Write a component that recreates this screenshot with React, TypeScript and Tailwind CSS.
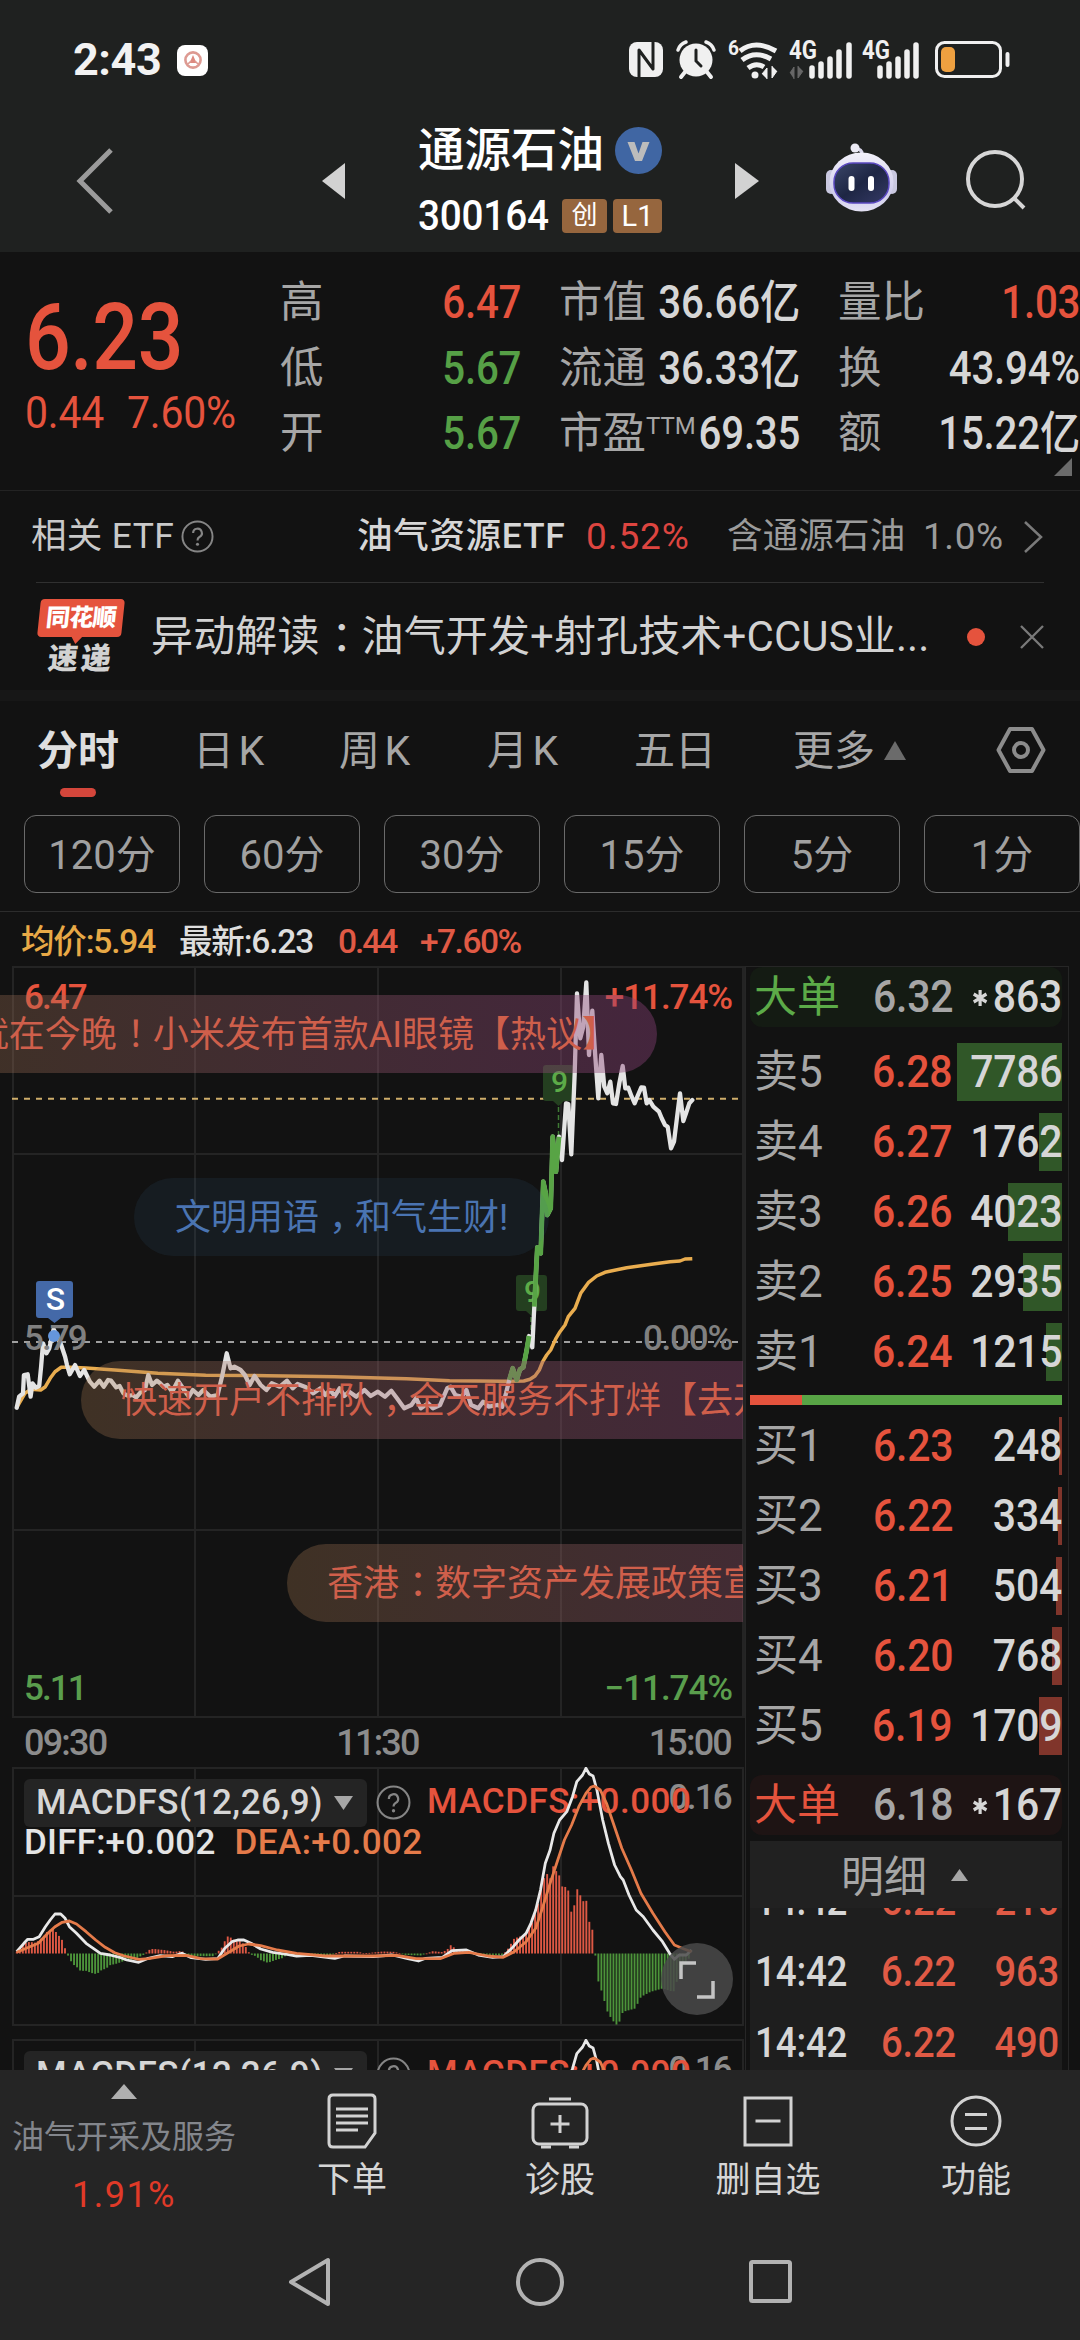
import React from 'react';
import { clsx } from 'clsx';

type Pt = [number, number];

interface Level {
  label: string;
  price: string;
  volume: string;
  bar: number;
}

const sells: Level[] = [
  { label: '卖5', price: '6.28', volume: '7786', bar: 105 },
  { label: '卖4', price: '6.27', volume: '1762', bar: 23 },
  { label: '卖3', price: '6.26', volume: '4023', bar: 54 },
  { label: '卖2', price: '6.25', volume: '2935', bar: 39 },
  { label: '卖1', price: '6.24', volume: '1215', bar: 16 },
];

const buys: Level[] = [
  { label: '买1', price: '6.23', volume: '248', bar: 3 },
  { label: '买2', price: '6.22', volume: '334', bar: 4 },
  { label: '买3', price: '6.21', volume: '504', bar: 6 },
  { label: '买4', price: '6.20', volume: '768', bar: 10 },
  { label: '买5', price: '6.19', volume: '1709', bar: 23 },
];

const ticks = [
  { time: '14:42', price: '6.22', volume: '210' },
  { time: '14:42', price: '6.22', volume: '963' },
  { time: '14:42', price: '6.22', volume: '490' },
];

// Morning part of the price line, sampled on a 2.09 x 3 grid
const priceEarly: Pt[] = [
  [35, 1343], [40, 1310], [48, 1300], [50, 1245], [58, 1243], [64, 1310], [68, 1270], [75, 1283], [82, 1278], [86, 1220], [90, 1150],
  [97, 1180], [103, 1165], [112, 1108], [118, 1125], [128, 1155], [136, 1190], [140, 1215], [146, 1243], [157, 1215], [167, 1248],
  [176, 1230], [188, 1265], [197, 1280], [208, 1262], [217, 1280], [226, 1260], [232, 1262], [243, 1282], [250, 1278], [258, 1300],
  [268, 1308], [277, 1305], [285, 1312], [295, 1295], [303, 1290], [310, 1245], [318, 1275], [328, 1262], [335, 1270], [342, 1280],
  [350, 1275], [360, 1295], [372, 1262], [385, 1290], [395, 1310], [403, 1290], [415, 1305], [425, 1290], [440, 1310], [455, 1305],
  [465, 1245], [474, 1180], [482, 1225], [490, 1220], [503, 1230], [512, 1245], [522, 1275], [532, 1248], [545, 1275], [557, 1290],
  [568, 1270], [585, 1280], [600, 1262], [612, 1285], [622, 1272], [640, 1282], [655, 1300], [670, 1285], [680, 1305], [690, 1290],
  [700, 1308], [710, 1285], [720, 1308], [730, 1295], [745, 1310], [762, 1290], [775, 1308], [790, 1295], [805, 1310], [818, 1292],
  [830, 1315], [845, 1345], [860, 1335], [870, 1315], [880, 1345], [895, 1330], [905, 1345], [920, 1335], [935, 1285], [942, 1280],
  [952, 1305], [965, 1310], [975, 1290], [985, 1335], [1000, 1345], [1010, 1325], [1022, 1340], [1040, 1335], [1050, 1340],
];

// The rally, sampled on a 3 x 3 grid that starts at x = 480
const priceRally: Pt[] = [
  [68, 1335], [78, 1300], [88, 1260], [98, 1225], [110, 1260], [120, 1228], [130, 1222], [140, 1170], [147, 1128], [157, 1162], [163, 1040],
  [172, 862], [182, 880], [190, 665], [197, 700], [202, 765], [212, 745], [218, 530], [228, 635], [237, 530], [246, 600], [258, 430],
  [265, 432], [274, 583], [284, 340], [291, 100], [301, 235], [310, 200], [319, 67], [327, 285], [337, 152], [346, 290], [355, 415],
  [364, 285], [373, 380], [382, 400], [391, 365], [399, 430], [408, 432], [418, 370], [428, 318], [436, 385], [445, 383], [455, 410],
  [464, 430], [474, 405], [484, 382], [492, 383], [500, 430], [508, 420], [520, 440], [537, 455], [545, 475], [555, 495], [563, 500],
  [573, 565], [582, 545], [590, 480], [600, 400], [610, 483], [618, 460], [628, 430], [637, 420],
];

const avgEarly: Pt[] = [
  [35, 1343], [52, 1300], [65, 1288], [85, 1290], [95, 1280], [105, 1255], [115, 1235], [128, 1222], [145, 1222], [180, 1224],
  [240, 1230], [330, 1240], [430, 1246], [560, 1247], [700, 1250], [850, 1256], [940, 1262], [1050, 1264], [1095, 1263],
];

const avgRally: Pt[] = [
  [150, 1258], [165, 1248], [178, 1230], [188, 1205], [200, 1185], [212, 1170], [228, 1135], [240, 1115], [255, 1095], [265, 1070],
  [285, 1045], [302, 1000], [325, 968], [350, 948], [375, 937], [440, 923], [520, 912], [570, 905], [600, 903], [615, 897], [637, 896],
];

const diffLine: Pt[] = [
  [35, 605], [50, 580], [58, 568], [70, 568], [82, 560], [95, 530], [105, 510], [115, 492], [127, 492], [136, 505], [145, 530],
  [160, 550], [180, 580], [195, 595], [210, 610], [230, 615], [250, 622], [265, 630], [290, 637], [310, 625], [335, 617], [360, 620],
  [380, 610], [400, 623], [430, 628], [455, 626], [470, 595], [485, 575], [497, 570], [510, 570], [525, 580], [545, 597], [570, 607],
  [600, 613], [620, 618], [650, 616], [700, 625], [720, 618], [780, 620], [820, 615], [850, 625], [875, 633], [890, 625], [925, 622],
  [945, 602], [975, 600], [1000, 615], [1030, 622], [1052, 620], [1070, 595], [1085, 570], [1100, 550], [1110, 520], [1120, 480],
  [1130, 420], [1140, 340], [1150, 300], [1158, 250], [1170, 210], [1185, 185], [1197, 140], [1206, 95], [1218, 75], [1225, 55],
  [1232, 72], [1240, 78], [1248, 120], [1260, 210], [1272, 280], [1285, 345], [1297, 380], [1303, 390], [1315, 435], [1330, 480],
  [1345, 500], [1365, 540], [1385, 575], [1400, 610], [1410, 628], [1420, 615], [1435, 615], [1446, 600],
];

const deaLine: Pt[] = [
  [35, 607], [60, 592], [80, 580], [100, 550], [115, 530], [130, 517], [145, 513], [160, 522], [180, 545], [200, 570], [220, 592],
  [240, 608], [260, 618], [290, 628], [310, 626], [350, 617], [390, 616], [420, 626], [455, 627], [480, 605], [500, 588], [520, 582],
  [545, 587], [580, 600], [620, 610], [680, 618], [780, 618], [830, 616], [870, 626], [920, 626], [950, 610], [980, 607], [1020, 618],
  [1052, 622], [1075, 605], [1100, 575], [1120, 535], [1135, 470], [1150, 400], [1165, 335], [1180, 270], [1195, 225], [1210, 170],
  [1225, 130], [1235, 112], [1242, 108], [1255, 120], [1268, 160], [1280, 210], [1300, 295], [1320, 360], [1340, 430], [1365, 490],
  [1390, 545], [1410, 585], [1430, 597], [1446, 605],
];

const histogram: Pt[] = [
  [35, 5], [50, 30], [62, 35], [75, 32], [90, 50], [100, 68], [110, 75], [115, 68], [122, 55], [130, 40], [136, 15], [140, 0],
  [145, -15], [152, -32], [160, -40], [168, -52], [180, -52], [190, -58], [202, -62], [212, -50], [222, -45], [230, -35], [245, -30],
  [260, -22], [280, -18], [303, -2], [310, 10], [320, 14], [345, 10], [365, 5], [380, 8], [388, -4], [410, -8], [445, -8], [455, 5],
  [465, 20], [474, 52], [482, 48], [490, 40], [500, 38], [510, 28], [518, 10], [522, -2], [535, -8], [545, -20], [560, -28],
  [575, -20], [590, -14], [600, -4], [620, -6], [640, -3], [690, -6], [710, 5], [750, 5], [760, 0], [800, 6], [825, 5], [845, -4],
  [880, -6], [905, 7], [925, 4], [935, 12], [942, 25], [955, 12], [965, 8], [980, 4], [1000, -3], [1050, -5], [1060, 10], [1075, 45],
  [1095, 55], [1105, 75], [1115, 100], [1125, 150], [1135, 220], [1143, 240], [1150, 225], [1157, 265], [1165, 240], [1172, 230],
  [1176, 195], [1182, 200], [1190, 185], [1194, 125], [1200, 140], [1206, 195], [1213, 175], [1218, 155], [1225, 165], [1232, 95],
  [1240, 65], [1244, 2], [1250, -80], [1257, -110], [1264, -145], [1270, -175], [1280, -200], [1290, -215], [1297, -200],
  [1302, -175], [1328, -165], [1340, -130], [1360, -115], [1385, -105], [1408, -115], [1418, -70], [1430, -30], [1445, -8],
];

const WIDE = 1568 / 750;

const project = (pts: Pt[], x0: number, y0: number, sx: number): Pt[] =>
  pts.map(([x, y]) => [+(x0 + x / sx).toFixed(1), +(y0 + y / 3).toFixed(1)]);

const toPoints = (pts: Pt[]) => pts.map((p) => p.join(',')).join(' ');

const rally = project(priceRally, 480, -6, 3);
const price = [...project(priceEarly, 0, -6, WIDE), ...rally];
const average = [...project(avgEarly, 0, -6, WIDE), ...project(avgRally, 480, -6, 3)];

const sample = (pts: Pt[], x: number) => {
  const i = pts.findIndex((p) => p[0] >= x);
  if (i <= 0) return pts[0][1];
  const [x1, y1] = pts[i - 1];
  const [x2, y2] = pts[i];
  return y1 + ((y2 - y1) * (x - x1)) / (x2 - x1);
};

const bars = Array.from({ length: 224 }, (_, i) => {
  const x = 35 + i * 6.3;
  return { x: x / WIDE, h: sample(histogram, x) / 3 };
});

// Full-width punctuation sits in the middle of its cell
function Cn({ children }: { children: string }) {
  return (
    <>
      {children.split(/([：，！])/).map((part, i) =>
        /[：，！]/.test(part) ? (
          <span key={i} className="inline-block w-[1em] indent-[0.28em]">{part}</span>
        ) : (
          <React.Fragment key={i}>{part}</React.Fragment>
        )
      )}
    </>
  );
}

interface NumProps {
  children: React.ReactNode;
  right?: boolean;
  tight?: boolean;
  className?: string;
}

// Slightly condensed numerals
function Num({ children, right, tight, className }: NumProps) {
  return (
    <span
      className={clsx(
        'inline-block tracking-[-0.005em]',
        tight ? 'scale-x-[0.875]' : 'scale-x-[0.91]',
        right ? 'origin-right' : 'origin-left',
        className
      )}
    >
      {children}
    </span>
  );
}

function StatusBar() {
  return (
    <div className="flex items-center h-[120px] pl-[73px] pr-[69px]">
      <span className="text-[45px] font-bold text-[#f2f2f2] tracking-[-0.01em]">2:43</span>
      <div className="ml-[16px] w-[31px] h-[31px] rounded-[8px] bg-white flex items-center justify-center">
        <svg width="22" height="22" viewBox="0 0 22 22" fill="none">
          <circle cx="11" cy="11" r="7.6" stroke="#dd9a92" strokeWidth="2.6" />
          <path d="M11 6l3.4 8H7.6z" fill="#dd8a80" />
          <path d="M6 15l3-3M16 15l-3-3" stroke="#dd9a92" strokeWidth="1.6" />
        </svg>
      </div>
      <div className="flex-1" />
      <svg width="383" height="44" viewBox="627 38 383 44" fill="none">
        {/* nfc */}
        <rect x="628" y="42" width="34" height="35" rx="8" fill="#f0f0f0" />
        <path d="M638 77V50L652 69V42" stroke="#1f2120" strokeWidth="3" strokeLinejoin="round" />
        {/* alarm */}
        <circle cx="695" cy="60" r="16.500" fill="#f0f0f0" />
        <path d="M677 50q2-6 8-8M713 50q-2-6-8-8" stroke="#f0f0f0" strokeWidth="3.500" strokeLinecap="round" />
        <path d="M684 72l-4 5M706 72l4 5" stroke="#f0f0f0" strokeWidth="4" strokeLinecap="round" />
        <path d="M695 50v11l5 5" stroke="#1f2120" strokeWidth="3" strokeLinecap="round" />
        {/* wifi */}
        <path d="M739 51q15-12 36 0" stroke="#f0f0f0" strokeWidth="5" />
        <path d="M741 60q13-10 29-1" stroke="#f0f0f0" strokeWidth="5" />
        <path d="M747 68q8-6 16-1" stroke="#f0f0f0" strokeWidth="5" />
        <circle cx="754" cy="75" r="3.500" fill="#f0f0f0" />
        <path d="M761 74l5-6v11M776 71l-5 7V66" fill="#f0f0f0" stroke="#f0f0f0" />
        <path d="M789 73l4-6v12M802 71l-5 7V66" fill="#666" stroke="#666" />
        {/* signal bars */}
        <path d="M811 76v-8M820 76V64M829 76V59M838 76V52M848 76V45" stroke="#f0f0f0" strokeWidth="5.500" strokeLinecap="round" />
        <path d="M879 76v-8M888 76V64M897 76V59M906 76V52M915 76V45" stroke="#f0f0f0" strokeWidth="5.500" strokeLinecap="round" />
        <g fill="#f0f0f0" fontFamily="Roboto" fontWeight="700">
          <text x="727" y="55" fontSize="20" textLength="11" lengthAdjust="spacingAndGlyphs">6</text>
          <text x="788" y="59" fontSize="25" textLength="28" lengthAdjust="spacingAndGlyphs">4G</text>
          <text x="861" y="59" fontSize="25" textLength="28" lengthAdjust="spacingAndGlyphs">4G</text>
        </g>
        {/* battery */}
        <rect x="935.500" y="42.500" width="64" height="34" rx="8" stroke="#f0f0f0" strokeWidth="3" />
        <rect x="940" y="47" width="14" height="25" rx="5" fill="#eea040" />
        <path d="M1006.500 54v11" stroke="#f0f0f0" strokeWidth="4" strokeLinecap="round" />
      </svg>
    </div>
  );
}

function Robot() {
  return (
    <svg width="74" height="72" viewBox="0 0 74 72" fill="none">
      <defs>
        <linearGradient id="shell" x1="0" y1="0" x2="0" y2="1">
          <stop offset="0" stopColor="#f2f1fa" />
          <stop offset="0.7" stopColor="#cfccec" />
          <stop offset="1" stopColor="#e4e2f4" />
        </linearGradient>
        <linearGradient id="visor" x1="0" y1="0" x2="1" y2="1">
          <stop offset="0" stopColor="#3a4668" />
          <stop offset="0.5" stopColor="#1e2644" />
          <stop offset="1" stopColor="#353a66" />
        </linearGradient>
      </defs>
      <path d="M36 14q3-6-3-8" stroke="#d8d6ea" strokeWidth="3.500" />
      <circle cx="30" cy="5" r="4.500" fill="#ecebf6" />
      <rect x="1" y="27" width="10" height="24" rx="5" fill="#c9c8e0" />
      <rect x="62" y="27" width="10" height="24" rx="5" fill="#c9c8e0" />
      <ellipse cx="36.500" cy="39" rx="32" ry="29.500" fill="url(#shell)" />
      <rect x="9" y="20" width="55" height="40" rx="19" fill="url(#visor)" stroke="#5a48c0" strokeWidth="1.500" />
      <rect x="23.500" y="33" width="6" height="15" rx="3" fill="#fff" />
      <rect x="43" y="33" width="6" height="15" rx="3" fill="#fff" />
    </svg>
  );
}

function TitleBar() {
  return (
    <div className="flex items-center h-[130px] pb-[8px]">
      <svg className="ml-[75px]" width="40" height="68" viewBox="0 0 40 68" fill="none">
        <path d="M36 3L5 34l31 31" stroke="#9b9b9b" strokeWidth="5" />
      </svg>
      <svg className="ml-[207px]" width="23" height="36" viewBox="0 0 23 36">
        <path d="M23 0v36L0 18z" fill="#d2d2d2" />
      </svg>
      <div className="ml-[73px] mb-[6px] w-[248px] flex flex-col gap-[22px]">
        <div className="flex items-center h-[54px]">
          <span className="text-[46.500px] leading-[54px] font-medium text-white whitespace-nowrap">通源石油</span>
          <svg className="ml-[11px] shrink-0" width="47" height="47" viewBox="0 0 47 47">
            <circle cx="23.500" cy="23.500" r="23.500" fill="#4066a3" />
            <path d="M12.500 15h7l4 11.500 4-11.500h7l-7.500 19h-7z" fill="#bcbcbc" />
          </svg>
        </div>
        <div className="flex items-center h-[34px]">
          <span className="w-[144px] text-[42.500px] leading-[34px] font-medium text-white">
            <Num>300164</Num>
          </span>
          <span className="w-[45px] h-[34px] rounded-[4px] bg-[#96663e] text-white text-[26px] leading-[33px] text-center">创</span>
          <span className="ml-[6px] w-[49px] h-[34px] rounded-[4px] bg-[#96663e] text-white text-[29px] leading-[34px] text-center">L1</span>
        </div>
      </div>
      <svg className="ml-[69px]" width="24" height="36" viewBox="0 0 24 36">
        <path d="M0 0v36l24-18z" fill="#d2d2d2" />
      </svg>
      <div className="ml-[66px] mb-[4px]">
        <Robot />
      </div>
      <svg className="ml-[67px]" width="62" height="62" viewBox="0 0 62 62" fill="none">
        <circle cx="29" cy="29" r="27" stroke="#d6d6d6" strokeWidth="4" />
        <path d="M48 48l10 10" stroke="#d6d6d6" strokeWidth="4" />
      </svg>
    </div>
  );
}

interface StatProps {
  label: React.ReactNode;
  value: string;
  tone?: string;
}

function Stat({ label, value, tone = 'text-[#d6d6d6]' }: StatProps) {
  return (
    <div className="flex items-center justify-between h-[65.5px] leading-[65px] whitespace-nowrap">
      <span className="text-[43.5px] text-[#a6a6a6]">{label}</span>
      <Num right tight className={clsx('text-[46px] font-medium -ml-[40px]', tone)}>{value}</Num>
    </div>
  );
}

function Quote() {
  const red = 'text-[#e5533d]';
  const green = 'text-[#56a046]';
  return (
    <section className="relative flex h-[239px] pt-[18px] border-b border-[#232323]">
      <div className="w-[280px] pl-[25px] text-[#e5533d] shrink-0">
        <div className="pt-[14px] text-[92px] leading-[108px] font-medium">
          <Num tight>6.23</Num>
        </div>
        <div className="flex text-[45px] leading-[34px] mt-[4px]">
          <span className="w-[102px]"><Num>0.44</Num></span>
          <Num>7.60%</Num>
        </div>
      </div>
      <div className="w-[241px] shrink-0">
        <Stat label="高" value="6.47" tone={red} />
        <Stat label="低" value="5.67" tone={green} />
        <Stat label="开" value="5.67" tone={green} />
      </div>
      <div className="w-[241px] ml-[38px] shrink-0">
        <Stat label="市值" value="36.66亿" />
        <Stat label="流通" value="36.33亿" />
        <Stat label={<>市盈<sup className="text-[24px] top-[-0.6em]">TTM</sup></>} value="69.35" />
      </div>
      <div className="w-[242px] ml-[38px] shrink-0">
        <Stat label="量比" value="1.03" tone={red} />
        <Stat label="换" value="43.94%" />
        <Stat label="额" value="15.22亿" />
      </div>
      <svg className="absolute right-[8px] bottom-[14px]" width="18" height="18">
        <path d="M18 0v18H0z" fill="#6b6b6b" />
      </svg>
    </section>
  );
}

function Help({ size }: { size: number }) {
  return (
    <svg width={size} height={size} viewBox="0 0 34 34" fill="none" className="shrink-0">
      <circle cx="17" cy="17" r="15.500" stroke="#858585" strokeWidth="2" />
      <path d="M12.500 13.500a4.500 4.500 0 1 1 6.500 4q-2 1.200-2 3.500" stroke="#858585" strokeWidth="2.200" />
      <circle cx="17" cy="25" r="1.600" fill="#858585" />
    </svg>
  );
}

function EtfRow() {
  return (
    <section className="mr-[36px] pl-[31px] h-[91px] flex items-center whitespace-nowrap text-[35.5px]">
      <span className="text-[#c9c9c9] w-[150px] tracking-[0.01em]">相关 ETF</span>
      <Help size={33} />
      <span className="ml-[143px] w-[229px] text-[#d6d6d6] font-medium tracking-[0.02em]">油气资源ETF</span>
      <span className="text-[37px] text-[#dd4540] w-[141px] tracking-[0.025em]">0.52%</span>
      <span className="text-[#9b9b9b] w-[196px] tracking-[0.005em]">含通源石油</span>
      <span className="text-[37px] text-[#9b9b9b] w-[96px] tracking-[0.015em]">1.0%</span>
      <svg className="ml-auto" width="22" height="34" viewBox="0 0 22 34" fill="none">
        <path d="M3 2l16 15L3 32" stroke="#7a7a7a" strokeWidth="2.500" />
      </svg>
    </section>
  );
}

function NewsRow() {
  return (
    <section className="mx-[36px] h-[108px] border-t border-[#303030] flex items-center text-[#d2d2d2]">
      <div className="w-[89px] h-[76px] shrink-0 flex flex-col items-center">
        <div className="relative w-[84px] h-[38px] shrink-0 rounded-[4px] bg-[#e5533d] -skew-x-6 flex items-center justify-center">
          <span className="text-[24px] leading-[36px] font-black text-white tracking-[-0.03em]">同花顺</span>
          <svg className="absolute left-[34px] top-[37px]" width="12" height="8">
            <path d="M0 0h12L5 8z" fill="#e5533d" />
          </svg>
        </div>
        <span className="mt-[6px] text-[30px] leading-[32px] font-black -skew-x-6 tracking-[0.1em]">速递</span>
      </div>
      <span className="ml-[26px] text-[42px] whitespace-nowrap w-[790px] tracking-[0.003em]">
        <Cn>异动解读：油气开发+射孔技术+CCUS业...</Cn>
      </span>
      <span className="ml-[26px] w-[18px] h-[18px] rounded-full bg-[#e5533d] shrink-0" />
      <svg className="ml-auto shrink-0" width="24" height="24" viewBox="0 0 24 24">
        <path d="M1 1l22 22M23 1L1 23" stroke="#7a7a7a" strokeWidth="2.300" />
      </svg>
    </section>
  );
}

function Tabs() {
  return (
    <section className="h-[211px] border-b border-[#2c2c2c]">
      <div className="relative h-[114px] pl-[37px] pt-[21px] flex text-[41px] leading-[58px] text-[#a6a6a6] whitespace-nowrap">
        <span className="w-[156px] text-[#dedede] font-bold">分时</span>
        <span className="w-[146px] tracking-[0.11em]">日K</span>
        <span className="w-[148px] tracking-[0.11em]">周K</span>
        <span className="w-[147px] tracking-[0.11em]">月K</span>
        <span className="w-[159px]">五日</span>
        <span>更多</span>
        <svg className="ml-[9px] mt-[19px]" width="22" height="19">
          <path d="M11 0l11 19H0z" fill="#6b6b6b" />
        </svg>
        <svg className="ml-[90px] mt-[4px]" width="50" height="48" viewBox="0 0 50 48" fill="none">
          <path d="M14 3h22L47.500 24 36 45H14L2.500 24z" stroke="#8c8c8c" strokeWidth="4" strokeLinejoin="round" />
          <circle cx="25" cy="24" r="7" stroke="#8c8c8c" strokeWidth="4" />
        </svg>
        <span className="absolute left-[60px] top-[87px] w-[36px] h-[9px] rounded-full bg-[#d4463b]" />
      </div>
      <div className="flex gap-[24px] pl-[24px]">
        {['120分', '60分', '30分', '15分', '5分', '1分'].map((p) => (
          <button
            key={p}
            className="w-[156px] h-[78px] shrink-0 rounded-[12px] border border-[#6a6a6a] text-[#a0a0a0] text-[40px] leading-[74px] pt-[3px]"
          >
            {p}
          </button>
        ))}
      </div>
    </section>
  );
}

function Legend() {
  return (
    <div className="flex items-center h-[54px] pt-[7px] pl-[21px] text-[33.5px] tracking-[-0.035em] font-medium whitespace-nowrap">
      <span className="w-[158px] text-[#e8a946]">均价:5.94</span>
      <span className="w-[159px] text-[#dedede]">最新:6.23</span>
      <span className="w-[82px] text-[#e05a45] tracking-[-0.06em]">0.44</span>
      <span className="text-[#e05a45] tracking-[-0.045em]">+7.60%</span>
    </div>
  );
}

function Grid({ h, rows }: { h: number; rows: number[] }) {
  return (
    <g stroke="#242424" strokeWidth="2">
      {[13, 195, 378, 561, 743].map((x) => (
        <path key={x} d={`M${x} 0V${h}`} />
      ))}
      {rows.map((y) => (
        <path key={y} d={`M12 ${y}H744`} />
      ))}
    </g>
  );
}

function NineFlag({ x, y }: { x: number; y: number }) {
  return (
    <g>
      <path d={`M${x + 3} ${y}h25q3 0 3 3v30q0 3-3 3h-7l-5.500 5-5.500-5h-7q-3 0-3-3v-30q0-3 3-3z`} fill="#243f20" />
      <text x={x + 15.5} y={y + 27} fontSize="30" fontWeight="500" fontFamily="Roboto" textAnchor="middle" fill="#5cab48">9</text>
    </g>
  );
}

function PriceChart() {
  return (
    <div className="relative h-[752px] overflow-hidden text-[35px] leading-[36px] font-medium tracking-[-0.055em]">
      <svg className="block" width="745" height="752" fill="none" strokeLinejoin="round">
        <Grid h={752} rows={[1, 188, 564, 751]} />
        <path d="M12 132.700H744" stroke="#cfae6b" strokeWidth="2" strokeDasharray="6 6" />
        <path d="M12 376H744" stroke="#a0a0a0" strokeWidth="2" strokeDasharray="6 6" />
        <NineFlag x={543} y={99} />
        <NineFlag x={516} y={309} />
        <path d="M558.500 141v30M531 351v14" stroke="#3f7a35" strokeWidth="1.500" strokeDasharray="5 3" />
        <polyline points={toPoints(average)} stroke="#e9ad4f" strokeWidth="3.500" />
        <polyline points={toPoints(price)} stroke="#e4e4e4" strokeWidth="4.300" strokeLinecap="round" />
        <polyline points={toPoints(rally.slice(2, 9))} stroke="#58a445" strokeWidth="4.800" />
        <polyline points={toPoints(rally.slice(10, 20))} stroke="#58a445" strokeWidth="4.800" />
        <circle cx="54" cy="370" r="6" fill="#6596dc" />
        <path d="M39 315h31q3 0 3 3v31q0 3-3 3h-9l-6.500 5-6.500-5h-9q-3 0-3-3v-31q0-3 3-3z" fill="#4469a8" />
        <text x="54.500" y="344" fontSize="32" fontFamily="Roboto" textAnchor="middle" fill="#fff">S</text>
      </svg>

      <span className="absolute left-[24px] top-[14px] text-[#e5533d]">6.47</span>
      <span className="absolute right-[13px] top-[14px] text-[#e5533d] tracking-[-0.03em]">+11.74%</span>
      <span className="absolute left-[24px] top-[355px] text-[#808080]">5.79</span>
      <span className="absolute right-[13px] top-[355px] text-[#808080] tracking-[-0.035em]">0.00%</span>
      <span className="absolute left-[24px] top-[705px] text-[#5a9e4d]">5.11</span>
      <span className="absolute right-[13px] top-[705px] text-[#5a9e4d] tracking-[-0.03em]">−11.74%</span>

      {/* Danmaku */}
      <div className="text-[36px] leading-[80px] font-normal tracking-normal whitespace-nowrap text-[#cf5f4b]">
        <div className="absolute right-[88px] top-[29px] h-[78px] pr-[39px] pl-[39px] rounded-full bg-linear-to-r from-[#a87a50]/30 to-[#8a4078]/42">
          <Cn>就在今晚！小米发布首款AI眼镜【热议】</Cn>
        </div>
        <div className="absolute left-[134px] top-[212px] h-[78px] px-[41px] rounded-full bg-[#3a6a90]/12 text-[#4a74b2]">
          <Cn>文明用语，和气生财!</Cn>
        </div>
        <div className="absolute left-[81px] top-[395px] h-[78px] px-[40px] rounded-full bg-linear-to-r from-[#a87a50]/30 to-[#8a4078]/42">
          <Cn>快速开户不排队，全天服务不打烊【去开户】</Cn>
        </div>
        <div className="absolute left-[287px] top-[578px] h-[78px] px-[40px] rounded-full bg-linear-to-r from-[#a87a50]/30 to-[#8a4078]/42">
          <Cn>香港：数字资产发展政策宣言2.0发布【热议】</Cn>
        </div>
      </div>
      <span className="absolute right-0 top-0 w-[2px] h-full bg-[#242424]" />
    </div>
  );
}

function MacdChart() {
  return (
    <div className="relative h-[259px] shrink-0 tracking-[0.014em] font-medium text-[35px] leading-[40px] whitespace-nowrap">
      <span className="absolute right-[14px] top-[11px] text-[#8c8c8c] tracking-[-0.05em]">0.16</span>
      <svg className="absolute left-0 top-0" width="745" height="259" fill="none" strokeLinejoin="round">
        <Grid h={259} rows={[1, 129, 258]} />
        {bars.map((b, i) => (
          <rect
            key={i}
            x={b.x - 0.9}
            y={b.h > 0 ? 186.5 - b.h : 186.5}
            width="1.900"
            height={Math.max(Math.abs(b.h), 0.8)}
            fill={b.h > 0 ? '#dd5844' : '#4c943a'}
          />
        ))}
      </svg>
      <div className="absolute left-[24px] top-[12px] h-[48px] w-[343px] rounded-[6px] bg-[#242424] flex items-center pl-[12px] text-[#d6d6d6]">
        <span className="w-[298px]">MACDFS(12,26,9)</span>
        <svg width="19" height="14">
          <path d="M0 0h19l-9.500 14z" fill="#a6a6a6" />
        </svg>
      </div>
      <div className="absolute left-[376px] top-[18px]">
        <Help size={35} />
      </div>
      <span className="absolute left-[427px] top-[15px] text-[#e5533d]">MACDFS:+0.000</span>
      <div className="absolute left-[24px] top-[56px] flex gap-[19px] text-[#e4e4e4] tracking-[0.006em]">
        <span>DIFF:+0.002</span>
        <span className="text-[#e57b4a] tracking-[0.012em]">DEA:+0.002</span>
      </div>
      <svg className="absolute left-0 top-0" width="745" height="259" fill="none" strokeLinejoin="round">
        <polyline points={toPoints(project(diffLine, 0, -17, WIDE))} stroke="#e8e8e8" strokeWidth="2.800" />
        <polyline points={toPoints(project(deaLine, 0, -17, WIDE))} stroke="#e57b4a" strokeWidth="2.800" />
      </svg>
    </div>
  );
}

function BigOrder({ price, volume, sell }: { price: string; volume: string; sell?: boolean }) {
  return (
    <div
      className={clsx(
        'flex items-center h-[60px] rounded-[12px] pl-[4px] text-[45px] font-medium text-[#a6a6a6]',
        sell ? 'bg-[#141b13]' : 'bg-[#1e1414]'
      )}
    >
      <span className={clsx('w-[119px] text-[43px] font-normal', sell ? 'text-[#5cab48]' : 'text-[#e5533d]')}>大单</span>
      <Num>{price}</Num>
      <Num right className="ml-auto text-[#d6d6d6]">
        <svg className="inline-block align-middle mr-[5px] mb-[4px]" width="18" height="18" viewBox="0 0 18 18">
          <path d="M9 1v16M2 5l14 8M16 5L2 13" stroke="#d6d6d6" strokeWidth="3.500" />
        </svg>
        {volume}
      </Num>
    </div>
  );
}

function LevelRow({ row, sell }: { row: Level; sell?: boolean }) {
  return (
    <div className="relative flex items-center h-[58px] pl-[4px] text-[45px] leading-[58px] font-medium">
      <span className={clsx('absolute right-0 top-0 h-full', sell ? 'bg-[#305728]' : 'bg-[#80352b]')} style={{ width: row.bar }} />
      <span className="w-[119px] text-[44px] font-normal text-[#a6a6a6]">{row.label}</span>
      <Num className="text-[#e5533d]">{row.price}</Num>
      <Num right className="relative ml-auto text-[#d6d6d6]">{row.volume}</Num>
    </div>
  );
}

function OrderBook() {
  return (
    <div className="w-[324px] h-full pl-[4px] pr-[6px] border border-b-0 border-[#262626] shrink-0">
      <BigOrder price="6.32" volume="863" sell />
      <div className="mt-[16px] flex flex-col gap-[12px]">
        {sells.map((row) => (
          <LevelRow key={row.label} row={row} sell />
        ))}
      </div>
      <div className="mt-[14px] h-[10px] flex">
        <span className="w-[52px] bg-[#e5533d]" />
        <span className="flex-1 bg-[#58a445]" />
      </div>
      <div className="mt-[12px] mb-[20px] flex flex-col gap-[12px]">
        {buys.map((row) => (
          <LevelRow key={row.label} row={row} />
        ))}
      </div>
      <BigOrder price="6.18" volume="167" />
      <div className="mt-[6px] h-[67px] pt-[4px] flex items-center pl-[91px] bg-[#212121] text-[43px] leading-[60px] text-[#a6a6a6]">
        明细
        <svg className="ml-[24px] mb-[4px]" width="17" height="12">
          <path d="M8.500 0L17 12H0z" fill="#a6a6a6" />
        </svg>
      </div>
      <div className="h-[162px] overflow-hidden bg-[#1e1e1e] flex flex-col justify-end">
        {ticks.map((t, i) => (
          <div
            key={i}
            className="flex items-center h-[71px] shrink-0 pl-[5px] pr-[3px] text-[42px] leading-[71px] font-medium text-[#e05a45] last:mb-[-8px]"
          >
            <span className="w-[126px] text-[#d6d6d6]">
              <Num tight>{t.time}</Num>
            </span>
            <Num>{t.price}</Num>
            <Num right className="ml-auto">{t.volume}</Num>
          </div>
        ))}
      </div>
    </div>
  );
}

function Action({ label, children }: { label: string; children: React.ReactNode }) {
  return (
    <div className="w-[208px] flex flex-col items-center pt-[20px] text-[#d6d6d6]">
      <svg width="60" height="60" viewBox="0 0 60 60" fill="none" stroke="#d2d2d2" strokeWidth="3">
        {children}
      </svg>
      <span className="mt-[10px] text-[35px] leading-[42px]">{label}</span>
    </div>
  );
}

function BottomBar() {
  return (
    <footer className="h-[270px] bg-[#252525]">
      <div className="flex h-[142px]">
        <div className="w-[248px] flex flex-col items-center pt-[14px] whitespace-nowrap">
          <svg className="shrink-0" width="26" height="15">
            <path d="M13 0l13 15H0z" fill="#b0b0b0" />
          </svg>
          <span className="mt-[16px] text-[32px] leading-[44px] text-[#83868c]">油气开采及服务</span>
          <span className="mt-[16px] -mb-[10px] text-[36px] leading-[40px] text-[#e03a28] tracking-[0.04em]">1.91%</span>
        </div>
        <Action label="下单">
          <path d="M11 5h38q4 0 4 4v34L43 57H11q-4 0-4-4V9q0-4 4-4z" />
          <path d="M14 19h32M14 26h32M14 33h32M14 40h22" />
        </Action>
        <Action label="诊股">
          <rect x="3" y="14" width="54" height="40" rx="6" />
          <path d="M19 9h22M30 25v18M20.500 34h19M11 57h10M39 57h10" />
        </Action>
        <Action label="删自选">
          <path d="M7 8h46v47H7zM17.500 31h25" />
        </Action>
        <Action label="功能">
          <circle cx="30" cy="31" r="24" />
          <path d="M19 24.500h22M19 38.500h22" />
        </Action>
      </div>
      <div className="flex items-center justify-between h-[140px] pl-[286px] pr-[286px]">
        <svg width="48" height="52" viewBox="0 0 48 52" fill="none">
          <path d="M42 4v44L5 26z" stroke="#b2b2b2" strokeWidth="4" strokeLinejoin="round" />
        </svg>
        <svg width="50" height="52" viewBox="0 0 50 52" fill="none">
          <circle cx="25" cy="26" r="22" stroke="#b2b2b2" strokeWidth="4" />
        </svg>
        <svg width="48" height="52" viewBox="0 0 48 52" fill="none">
          <rect x="5" y="6" width="39" height="39" rx="1.500" stroke="#b2b2b2" strokeWidth="4" />
        </svg>
      </div>
    </footer>
  );
}

export default function App() {
  return (
    <div className="w-[1080px] h-[2340px] overflow-hidden bg-[#121212] font-['Roboto','Noto_Sans_CJK_SC',sans-serif]">
      <header className="h-[252px] bg-[#1f2120]">
        <StatusBar />
        <TitleBar />
      </header>
      <Quote />
      <EtfRow />
      <NewsRow />
      <div className="h-[11px] bg-[#171717]" />
      <Tabs />
      <Legend />
      <div className="flex h-[1104px] overflow-hidden">
        <div className="relative w-[745px] shrink-0">
          <PriceChart />
          <div className="flex justify-between items-center h-[49px] pl-[24px] pr-[14px] text-[36px] font-medium text-[#8c8c8c] tracking-[-0.05em]">
            <span>09:30</span>
            <span>11:30</span>
            <span>15:00</span>
          </div>
          <MacdChart />
          <div className="h-[13px]" />
          <MacdChart />
          <div className="absolute left-[661px] top-[977px] w-[72px] h-[72px] rounded-full bg-[#4a4a4a]/85">
            <svg width="72" height="72" viewBox="0 0 72 72" fill="none">
              <path d="M20 36V20h15M36 54h16V38" stroke="#c4c4c4" strokeWidth="3.500" />
            </svg>
          </div>
        </div>
        <OrderBook />
      </div>
      <BottomBar />
    </div>
  );
}
